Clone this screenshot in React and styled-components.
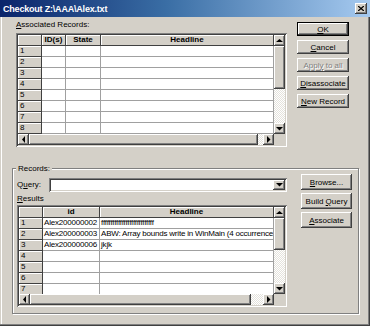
import React from 'react'
import styled, { createGlobalStyle, css } from 'styled-components'

const FACE = '#d4d0c8'

const GlobalStyle = createGlobalStyle`
  html, body { margin:0; padding:0; background:${FACE}; }
  body { font-family:"Liberation Sans", Arial, sans-serif; font-size:8px; color:#000; }
  * { box-sizing:border-box; }
`

const raised = css`
  background:${FACE};
  box-shadow: inset -1px -1px #404040, inset 1px 1px #fff, inset -2px -2px #808080, inset 2px 2px ${FACE};
`
const sunken = css`
  padding:2px;
  box-shadow: inset 1px 1px #808080, inset -1px -1px #fff, inset 2px 2px #404040, inset -2px -2px ${FACE};
`

const Window = styled.div`
  width:370px;
  height:326px;
  background:${FACE};
  display:flex;
  flex-direction:column;
  box-shadow: inset -1px -1px #404040, inset -2px -2px #808080, inset 1px 1px ${FACE}, inset 2px 2px #fff;
`
const TitleBar = styled.div`
  height:17px;
  flex:none;
  display:flex;
  align-items:center;
  justify-content:space-between;
  padding:0 3px 0 3px;
  background:linear-gradient(90deg, #0a246a 0%, #3a6ea5 45%, #a6caf0 100%);
  color:#fff;
  font-weight:bold;
  font-size:9px;
  letter-spacing:-0.2px;
`
const CloseBtn = styled.div`
  ${raised};
  width:12px;
  height:11px;
  display:flex;
  align-items:center;
  justify-content:center;
`
const Top = styled.div`
  display:flex;
  padding-left:16px;
`
const Col = styled.div`
  width:${p => p.$w}px;
  margin-top:${p => p.$mt || 0}px;
  display:flex;
  flex-direction:column;
`
const Label = styled.div`
  height:${p => p.$h}px;
  line-height:${p => p.$h}px;
  white-space:nowrap;
`
const QueryLabel = styled(Label)`
  width:32px;
  flex:none;
`
const Buttons = styled.div`
  width:${p => p.$w}px;
  margin-left:${p => p.$ml}px;
  padding-top:${p => p.$pt}px;
  display:flex;
  flex-direction:column;
  gap:${p => p.$gap}px;
`
const Btn = styled.div`
  ${raised};
  height:${p => p.$h || 14}px;
  display:flex;
  align-items:center;
  justify-content:center;
  white-space:pre;
  ${p => p.$default && css`
    box-shadow: inset 0 0 0 1px #000, inset -2px -2px #404040, inset 2px 2px #fff, inset -3px -3px #808080;
  `}
  ${p => p.$disabled && css`
    color:#808080;
    text-shadow:1px 1px #fff;
  `}
`
const GridFrame = styled.div`
  ${sunken};
  width:${p => p.$w}px;
  height:${p => p.$h}px;
  display:flex;
  flex-direction:column;
  background:${FACE};
`
const GridMain = styled.div`
  flex:1;
  display:flex;
  min-height:0;
`
const Table = styled.div`
  flex:1;
  display:grid;
  grid-template-columns:${p => p.$cols};
  grid-auto-rows:11px;
  align-content:start;
  overflow:hidden;
  background:#fff;
`
const HeadCell = styled.div`
  background:${FACE};
  border-right:1px solid #404040;
  border-bottom:1px solid #404040;
  box-shadow:inset 1px 1px #fff;
  font-weight:${p => p.$num ? 'normal' : 'bold'};
  text-align:${p => p.$num ? 'left' : 'center'};
  padding-left:${p => p.$num ? 2 : 0}px;
  line-height:10px;
  overflow:hidden;
  white-space:nowrap;
`
const Cell = styled.div`
  border-right:1px solid #a0a0a0;
  border-bottom:1px solid #a0a0a0;
  padding-left:1px;
  line-height:10px;
  letter-spacing:-0.2px;
  white-space:nowrap;
  overflow:hidden;
`
const VBar = styled.div`
  width:11px;
  flex:none;
  display:flex;
  flex-direction:column;
`
const HBar = styled.div`
  height:11px;
  flex:none;
  display:flex;
`
const Arrow = styled.div`
  ${raised};
  width:11px;
  height:11px;
  flex:none;
  display:flex;
  align-items:center;
  justify-content:center;
`
const Thumb = styled.div`
  ${raised};
  flex:none;
  ${p => p.$vertical ? css`height:${p.$size}px;` : css`width:${p.$size}px;`}
`
const Track = styled.div`
  flex:1;
  background-color:#fff;
  background-image:repeating-conic-gradient(#e4e2dc 0 25%, #fff 0 50%);
  background-size:2px 2px;
`
const Corner = styled.div`
  width:11px;
  flex:none;
  background:${FACE};
`
const Group = styled.div`
  position:relative;
  margin:21px 0 0 12px;
  width:347px;
  height:146px;
  border:1px solid #808080;
  box-shadow:inset 1px 1px #fff, 1px 1px #fff;
  display:flex;
  padding:5px 0 0 4px;
`
const Legend = styled.div`
  position:absolute;
  top:-6px;
  left:3px;
  padding:0 2px;
  line-height:11px;
  background:${FACE};
`
const QueryRow = styled.div`
  height:14px;
  display:flex;
  align-items:stretch;
`
const Combo = styled.div`
  ${sunken};
  width:238px;
  display:flex;
  justify-content:flex-end;
  background:#fff;
`
const DropBtn = styled(Arrow)`
  width:12px;
  height:10px;
`

const Tri = ({ dir }) => {
  const pts = {
    up: '0,3 3.5,0 7,3',
    down: '0,0 7,0 3.5,3.5',
    left: '3,0 3,7 0,3.5',
    right: '0,0 0,7 3.5,3.5',
  }[dir]
  const vertical = dir === 'up' || dir === 'down'
  return (
    <svg width={vertical ? 7 : 4} height={vertical ? 4 : 7} viewBox={vertical ? '0 0 7 4' : '0 0 4 7'}>
      <polygon points={pts} fill="#000" />
    </svg>
  )
}

const U = styled.span`text-decoration:underline;`

function Grid({ w, h, cols, headers, rows, count, vThumb, hThumb }) {
  return (
    <GridFrame $w={w} $h={h}>
      <GridMain>
        <Table $cols={cols}>
          <HeadCell />
          {headers.map(hd => <HeadCell key={hd}>{hd}</HeadCell>)}
          {Array.from({ length: count }).map((_, i) => (
            <React.Fragment key={i}>
              <HeadCell $num>{i + 1}</HeadCell>
              {headers.map((hd, j) => <Cell key={hd}>{(rows[i] || [])[j] || ''}</Cell>)}
            </React.Fragment>
          ))}
        </Table>
        <VBar>
          <Arrow><Tri dir="up" /></Arrow>
          <Thumb $vertical $size={vThumb} />
          <Track />
          <Arrow><Tri dir="down" /></Arrow>
        </VBar>
      </GridMain>
      <HBar>
        <Arrow><Tri dir="left" /></Arrow>
        <Thumb $size={hThumb} />
        <Track />
        <Arrow><Tri dir="right" /></Arrow>
        <Corner />
      </HBar>
    </GridFrame>
  )
}

const results = [
  ['Alex200000002', 'ffffffffffffffffffffffffffff'],
  ['Alex200000003', 'ABW: Array bounds write in WinMain (4 occurrences)'],
  ['Alex200000006', 'jkjk'],
]

export default function App() {
  return (
    <>
      <GlobalStyle />
      <Window>
        <TitleBar>
          <span>Checkout Z:\AAA\Alex.txt</span>
          <CloseBtn>
            <svg width="6" height="5" viewBox="0 0 6 5">
              <path d="M0 0 L6 5 M6 0 L0 5" stroke="#000" strokeWidth="1.3" />
            </svg>
          </CloseBtn>
        </TitleBar>
        <Top>
          <Col $w={271}>
            <Label $h={16}><U>A</U>ssociated Records:</Label>
            <Grid
              w={271}
              h={114}
              cols="24px 24px 35px 1fr"
              headers={['ID(s)', 'State', 'Headline']}
              rows={[]}
              count={8}
              vThumb={43}
              hThumb={229}
            />
          </Col>
          <Buttons $w={52} $ml={10} $pt={5} $gap={4}>
            <Btn $default><U>O</U>K</Btn>
            <Btn><U>C</U>ancel</Btn>
            <Btn $disabled>Appl<U>y</U>{' to all'}</Btn>
            <Btn><U>D</U>isassociate</Btn>
            <Btn><U>N</U>ew Record</Btn>
          </Buttons>
        </Top>
        <Group>
          <Legend>Records:</Legend>
          <Col $w={270} $mt={4}>
            <QueryRow>
              <QueryLabel $h={14}>Q<U>u</U>ery:</QueryLabel>
              <Combo>
                <DropBtn><Tri dir="down" /></DropBtn>
              </Combo>
            </QueryRow>
            <Label $h={13}><U>R</U>esults</Label>
            <Grid
              w={270}
              h={102}
              cols="24px 57px 1fr"
              headers={['id', 'Headline']}
              rows={results}
              count={7}
              vThumb={32}
              hThumb={221}
            />
          </Col>
          <Buttons $w={51} $ml={14} $pt={0} $gap={3}>
            <Btn $h={16}><U>B</U>rowse...</Btn>
            <Btn $h={16}>Build <U>Q</U>uery</Btn>
            <Btn $h={16}><U>A</U>ssociate</Btn>
          </Buttons>
        </Group>
      </Window>
    </>
  )
}
